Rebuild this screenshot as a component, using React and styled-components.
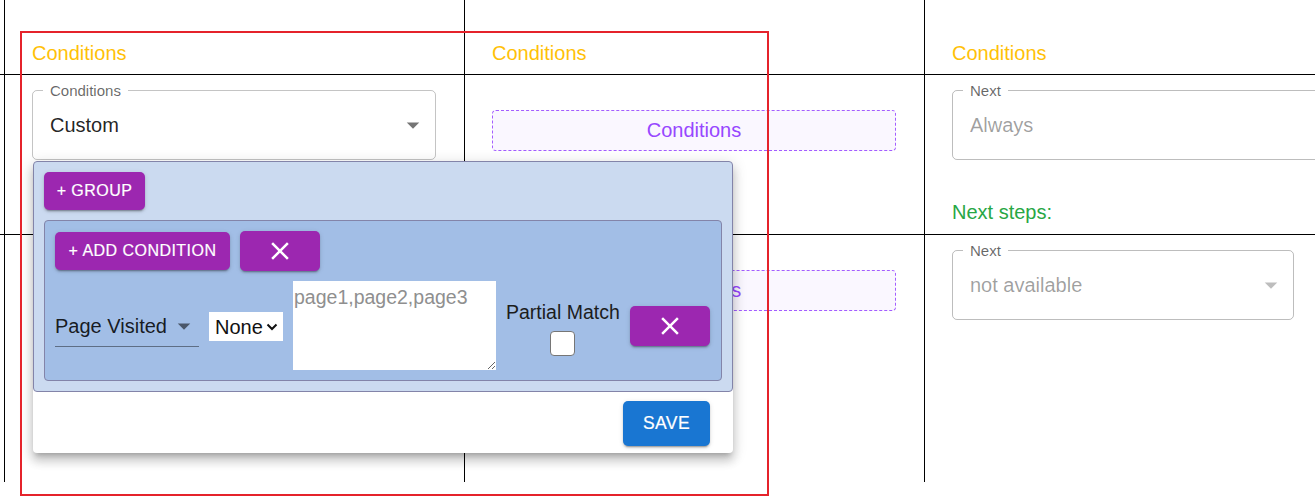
import React from "react";
import styled, { createGlobalStyle } from "styled-components";

const GlobalStyle = createGlobalStyle`
  * {
    box-sizing: border-box;
  }
  body {
    margin: 0;
    background: #ffffff;
    font-family: "Liberation Sans", Arial, sans-serif;
    overflow: hidden;
  }
`;

const CLOSE_PATH =
  "M19 6.41 17.59 5 12 10.59 6.41 5 5 6.41 10.59 12 5 17.59 6.41 19 12 13.41 17.59 19 19 17.59 13.41 12z";

const CloseIcon = () => (
  <svg width="30" height="30" viewBox="0 0 24 24">
    <path d={CLOSE_PATH} fill="#ffffff" />
  </svg>
);

const DropArrow = ({ color }) => (
  <svg width="30" height="30" viewBox="0 0 24 24">
    <path d="M7 10l5 5 5-5z" fill={color} />
  </svg>
);

const App = () => {
  return (
    <React.Fragment>
      <GlobalStyle />
      <Page>
        <Row $h={74} $first>
          <Cell $head>
            <HeadTitle>Conditions</HeadTitle>
          </Cell>
          <Cell $head>
            <HeadTitle>Conditions</HeadTitle>
          </Cell>
          <Cell $head>
            <HeadTitle>Conditions</HeadTitle>
          </Cell>
        </Row>

        <Row $h={160}>
          <Cell>
            <Anchor>
              <Outlined $w={404}>
                <FloatLabel>Conditions</FloatLabel>
                <span>Custom</span>
                <DropArrow color="rgba(0,0,0,0.54)" />
              </Outlined>

              <Popover>
                <GroupBox>
                  <ActionButton $w={101} $h={38}>
                    + Group
                  </ActionButton>
                  <ConditionBox>
                    <ButtonRow>
                      <ActionButton $w={175} $h={38}>
                        + Add Condition
                      </ActionButton>
                      <ActionButton $w={80} $h={40}>
                        <CloseIcon />
                      </ActionButton>
                    </ButtonRow>
                    <ConditionRow>
                      <UnderlineSelect>
                        <span>Page Visited</span>
                        <DropArrow color="rgba(0,0,0,0.54)" />
                      </UnderlineSelect>
                      <SelectWrap>
                        <NativeSelect defaultValue="none">
                          <option value="none">None</option>
                        </NativeSelect>
                        <Chevron width="12" height="8" viewBox="0 0 12 8">
                          <polyline
                            points="1.5,1.5 6,6 10.5,1.5"
                            fill="none"
                            stroke="#111"
                            strokeWidth="2"
                          />
                        </Chevron>
                      </SelectWrap>
                      <ValueArea placeholder="page1,page2,page3" />
                      <CheckColumn>
                        Partial Match
                        <Check />
                      </CheckColumn>
                      <ActionButton $w={80} $h={40}>
                        <CloseIcon />
                      </ActionButton>
                    </ConditionRow>
                  </ConditionBox>
                </GroupBox>
                <Footer>
                  <ActionButton $w={87} $h={45} $tone="blue" $size={17.5}>
                    Save
                  </ActionButton>
                </Footer>
              </Popover>
            </Anchor>
          </Cell>
          <Cell>
            <DashedBox>Conditions</DashedBox>
          </Cell>
          <Cell>
            <Outlined $w={404} $disabled>
              <FloatLabel>Next</FloatLabel>
              <span>Always</span>
            </Outlined>
            <NextSteps>Next steps:</NextSteps>
          </Cell>
        </Row>

        <Row $h={248}>
          <Cell />
          <Cell>
            <DashedBox>Conditions</DashedBox>
          </Cell>
          <Cell>
            <Outlined $w={342} $disabled>
              <FloatLabel>Next</FloatLabel>
              <span>not available</span>
              <DropArrow color="rgba(0,0,0,0.26)" />
            </Outlined>
          </Cell>
        </Row>

        <Highlight />
      </Page>
    </React.Fragment>
  );
};

export default App;

const Page = styled.div`
  position: relative;
  width: 1315px;
  height: 497px;
  overflow: hidden;
`;

const Row = styled.div`
  display: flex;
  width: max-content;
  height: ${(p) => p.$h}px;
  padding-left: 4px;
  border-top: ${(p) => (p.$first ? "none" : "1px solid #000000")};
`;

const Cell = styled.div`
  width: 460px;
  flex-shrink: 0;
  display: flex;
  flex-direction: column;
  align-items: flex-start;
  border-left: 1px solid #000000;
  padding: ${(p) => (p.$head ? "42px 28px 0 27px" : "15px 28px 0 27px")};
`;

const HeadTitle = styled.div`
  font-size: 20px;
  line-height: 23px;
  color: #ffc107;
`;

const Anchor = styled.div`
  position: relative;
`;

const Outlined = styled.div`
  position: relative;
  width: ${(p) => p.$w}px;
  height: 70px;
  display: flex;
  align-items: center;
  justify-content: space-between;
  padding: 0 7px 0 17px;
  border: 1px solid rgba(0, 0, 0, ${(p) => (p.$disabled ? 0.26 : 0.23)});
  border-radius: 5px;
  font-size: 20px;
  color: ${(p) => (p.$disabled ? "rgba(0,0,0,0.38)" : "rgba(0,0,0,0.87)")};
`;

const FloatLabel = styled.span`
  position: absolute;
  left: 10px;
  top: -9px;
  padding: 0 7px;
  background: #ffffff;
  font-size: 15px;
  line-height: 17px;
  color: rgba(0, 0, 0, 0.6);
`;

const DashedBox = styled.div`
  margin-top: 20px;
  width: 404px;
  height: 41px;
  display: flex;
  align-items: center;
  justify-content: center;
  border: 1px dashed #a35dff;
  border-radius: 4px;
  background: #faf7ff;
  color: #9747ff;
  font-size: 20px;
`;

const NextSteps = styled.div`
  margin-top: 41px;
  font-size: 20px;
  line-height: 23px;
  color: #28a745;
`;

const Popover = styled.div`
  position: absolute;
  top: 71px;
  left: 1px;
  z-index: 10;
  width: 700px;
  background: #ffffff;
  border-radius: 4px;
  box-shadow: 0px 5px 5px -3px rgba(0, 0, 0, 0.2),
    0px 8px 10px 1px rgba(0, 0, 0, 0.14), 0px 3px 14px 2px rgba(0, 0, 0, 0.12);
`;

const GroupBox = styled.div`
  display: flex;
  flex-direction: column;
  align-items: flex-start;
  gap: 10px;
  padding: 10px;
  background: #cbdaf0;
  border: 1px solid #8384a9;
  border-radius: 4px;
`;

const ConditionBox = styled.div`
  align-self: stretch;
  display: flex;
  flex-direction: column;
  gap: 10px;
  padding: 10px;
  background: #a2bee6;
  border: 1px solid #8384a9;
  border-radius: 4px;
`;

const ButtonRow = styled.div`
  display: flex;
  align-items: center;
  gap: 10px;
`;

const ConditionRow = styled.div`
  display: flex;
  align-items: center;
  gap: 10px;
`;

const ActionButton = styled.button`
  flex-shrink: 0;
  display: inline-flex;
  align-items: center;
  justify-content: center;
  width: ${(p) => p.$w}px;
  height: ${(p) => p.$h}px;
  padding: 0;
  border: none;
  border-radius: 5px;
  background: ${(p) => (p.$tone === "blue" ? "#1976d2" : "#9c27b0")};
  color: #ffffff;
  font-family: inherit;
  font-size: ${(p) => p.$size || 16}px;
  font-weight: 500;
  letter-spacing: 0.46px;
  text-transform: uppercase;
  -webkit-text-stroke: 0.2px #ffffff;
  box-shadow: 0px 3px 1px -2px rgba(0, 0, 0, 0.2),
    0px 2px 2px 0px rgba(0, 0, 0, 0.14), 0px 1px 5px 0px rgba(0, 0, 0, 0.12);
  cursor: pointer;
`;

const UnderlineSelect = styled.div`
  width: 144px;
  height: 42px;
  display: flex;
  align-items: center;
  justify-content: space-between;
  padding-top: 2px;
  border-bottom: 1px solid rgba(0, 0, 0, 0.42);
  font-size: 20px;
  color: rgba(0, 0, 0, 0.87);
`;

const SelectWrap = styled.div`
  position: relative;
  width: 74px;
  height: 29px;
  margin-top: 2px;
`;

const NativeSelect = styled.select`
  appearance: none;
  width: 100%;
  height: 100%;
  margin: 0;
  padding: 1px 0 0 6px;
  border: none;
  border-radius: 0;
  background: #ffffff;
  color: #111111;
  font-family: inherit;
  font-size: 20px;
  outline: none;
`;

const Chevron = styled.svg`
  position: absolute;
  right: 5px;
  top: 50%;
  transform: translateY(-50%);
  pointer-events: none;
`;

const ValueArea = styled.textarea`
  width: 203px;
  height: 89px;
  margin: 0;
  padding: 5px 1px;
  border: none;
  border-radius: 0;
  background: #ffffff;
  font-family: inherit;
  font-size: 19.5px;
  color: #111111;
  resize: both;
  outline: none;

  &::placeholder {
    color: #8f8f8f;
  }
`;

const CheckColumn = styled.label`
  display: flex;
  flex-direction: column;
  align-items: center;
  gap: 7px;
  padding-top: 6px;
  font-size: 19.5px;
  line-height: 23px;
  color: #1c1c1c;
  white-space: nowrap;
`;

const Check = styled.input.attrs({ type: "checkbox" })`
  appearance: none;
  margin: 0;
  width: 25px;
  height: 25px;
  border: 1px solid #767676;
  border-radius: 4px;
  background: #ffffff;
`;

const Footer = styled.div`
  display: flex;
  justify-content: flex-end;
  padding: 9px 23px 7px;
`;

const Highlight = styled.div`
  position: absolute;
  left: 20px;
  top: 31px;
  width: 749px;
  height: 465px;
  border: 2px solid #e5232b;
  pointer-events: none;
  z-index: 20;
`;
